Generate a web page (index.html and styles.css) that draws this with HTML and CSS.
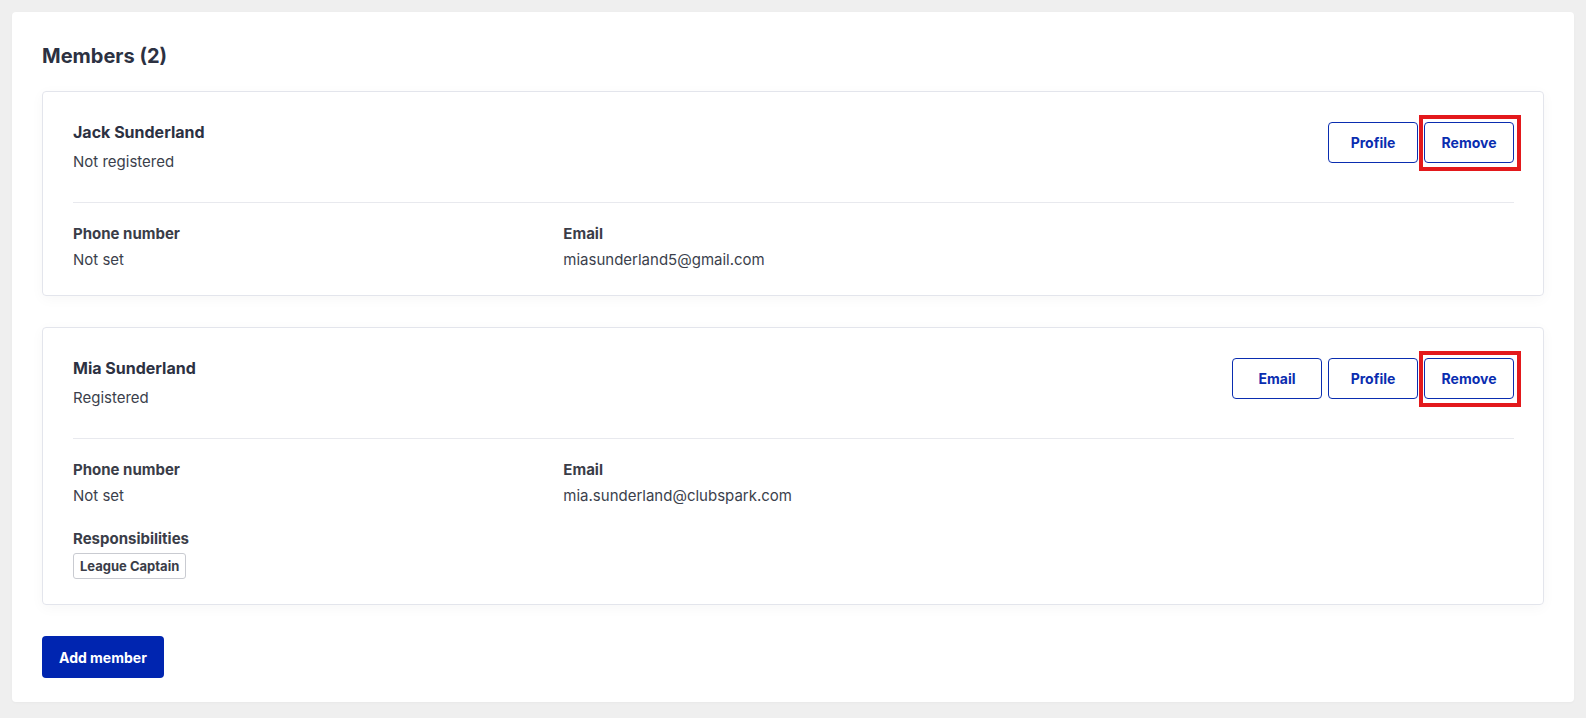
FILE: index.html
```html
<!DOCTYPE html>
<html lang="en">
<head>
<meta charset="utf-8">
<title>Members</title>
<link rel="stylesheet" href="styles.css">
</head>
<body>
<main class="panel">
  <h2 class="title">Members (2)</h2>

  <section class="card">
    <div class="card-head">
      <div class="who">
        <div class="name">Jack Sunderland</div>
        <div class="status">Not registered</div>
      </div>
      <div class="actions">
        <button class="btn-outline">Profile</button>
        <button class="btn-outline highlighted">Remove</button>
      </div>
    </div>
    <hr class="divider">
    <div class="fields">
      <div class="field">
        <div class="label">Phone number</div>
        <div class="value">Not set</div>
      </div>
      <div class="field">
        <div class="label">Email</div>
        <div class="value">miasunderland5@gmail.com</div>
      </div>
    </div>
  </section>

  <section class="card">
    <div class="card-head">
      <div class="who">
        <div class="name">Mia Sunderland</div>
        <div class="status">Registered</div>
      </div>
      <div class="actions">
        <button class="btn-outline">Email</button>
        <button class="btn-outline">Profile</button>
        <button class="btn-outline highlighted">Remove</button>
      </div>
    </div>
    <hr class="divider">
    <div class="fields">
      <div class="field">
        <div class="label">Phone number</div>
        <div class="value">Not set</div>
      </div>
      <div class="field">
        <div class="label">Email</div>
        <div class="value">mia.sunderland@clubspark.com</div>
      </div>
      <div class="field field-full">
        <div class="label">Responsibilities</div>
        <div class="tags"><span class="tag">League Captain</span></div>
      </div>
    </div>
  </section>

  <button class="btn-primary">Add member</button>
</main>
</body>
</html>
```

FILE: styles.css
```css
* { box-sizing: border-box; }

html, body {
  margin: 0;
  background: #efefef;
}

body {
  padding: 12px 12px 16px;
  font-family: Inter, "Noto Sans", "Liberation Sans", sans-serif;
  color: #3b3f4c;
}

.panel {
  background: #ffffff;
  border-radius: 4px;
  padding: 30px 30px 24px;
  box-shadow: 0 1px 3px rgba(0, 0, 0, 0.03);
}

.title {
  margin: 0 0 21px;
  font-size: 20px;
  line-height: 28px;
  font-weight: 700;
  color: #2c3142;
}

.card {
  border: 1px solid #e3e5ec;
  border-radius: 4px;
  padding: 30px 29px 25px 30px;
  margin-bottom: 31px;
  box-shadow: 0 3px 14px rgba(0, 0, 0, 0.035);
}

.card-head {
  display: flex;
  justify-content: space-between;
  align-items: flex-start;
}

.name {
  font-size: 16px;
  line-height: 20px;
  font-weight: 700;
  color: #2c3142;
  margin-bottom: 10px;
}

.status {
  font-size: 15px;
  line-height: 20px;
  color: #3b3f4c;
}

.actions {
  display: flex;
  gap: 6px;
}

.btn-outline {
  position: relative;
  height: 41px;
  width: 90px;
  background: #ffffff;
  border: 1px solid #0a2db0;
  border-radius: 4px;
  color: #0a2db0;
  font-family: Inter, "Noto Sans", "Liberation Sans", sans-serif;
  font-size: 14px;
  font-weight: 700;
  padding: 0;
  cursor: pointer;
}

.btn-outline.highlighted::after {
  content: "";
  position: absolute;
  left: -6px;
  right: -8px;
  top: -8px;
  bottom: -9px;
  border: 4px solid #e3191c;
  pointer-events: none;
}

.divider {
  border: 0;
  border-top: 1px solid #e8e9ee;
  margin: 30px 0 0;
}

.fields {
  display: grid;
  grid-template-columns: 1fr 1fr 1fr;
  column-gap: 30px;
  row-gap: 23px;
  padding-top: 21px;
}

.field-full {
  grid-column: 1 / -1;
}

.label {
  font-size: 15px;
  line-height: 20px;
  font-weight: 700;
  color: #3a3d48;
  margin-bottom: 6px;
}

.field-full .label {
  margin-bottom: 4px;
}

.value {
  font-size: 15px;
  line-height: 20px;
  color: #3b3f4c;
}

.tags {
  display: flex;
  gap: 6px;
}

.tag {
  display: inline-block;
  border: 1px solid #c9cbd1;
  border-radius: 3px;
  padding: 0 6px;
  height: 26px;
  line-height: 24px;
  font-size: 13px;
  font-weight: 700;
  color: #3a3d48;
}

.btn-primary {
  height: 42px;
  padding: 0 17px;
  background: #0025b0;
  border: 0;
  border-radius: 4px;
  color: #ffffff;
  font-family: Inter, "Noto Sans", "Liberation Sans", sans-serif;
  font-size: 14px;
  font-weight: 700;
  cursor: pointer;
}
```
